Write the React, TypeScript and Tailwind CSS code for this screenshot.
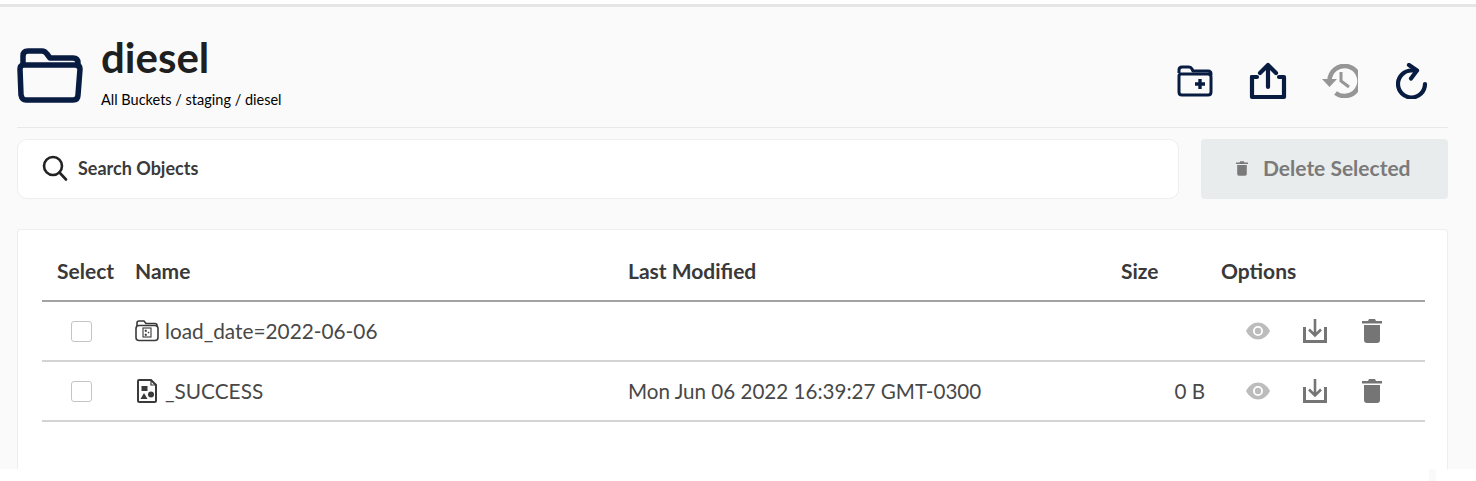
const navy = '#081c42';

const FolderIcon = () => (
  <svg viewBox="0 0 66 56" className="w-[66px] h-[56px]" fill="none" stroke={navy} strokeWidth="5.5" strokeLinejoin="round" strokeLinecap="round">
    <path d="M6 17V9q0-5 5-5h14q3 0 5 3l3 4h23q5 0 5 5v3" />
    <path d="M3 22q0-4 4-4h52q4 0 4 4l-2 26q0 5-5 5H9q-4 0-5-5z" />
  </svg>
);

const NewPathIcon = () => (
  <svg viewBox="0 0 36 32" className="w-[36px] h-[32px]" fill="none" stroke={navy} strokeWidth="3" strokeLinejoin="round">
    <path d="M2 8V5q0-3 3-3h7q2 0 3 2l1 2h15q3 0 3 3v1" />
    <path d="M2 11q0-2 2-2h27q3 0 3 3v15q0 3-3 3H5q-3 0-3-3z" />
    <path d="M23 14v10M18 19h10" strokeWidth="3.4" />
  </svg>
);

const UploadIcon = () => (
  <svg viewBox="0 0 38 38" className="w-[38px] h-[38px]" fill="none" stroke={navy} strokeWidth="4.2" strokeLinecap="round" strokeLinejoin="round">
    <path d="M19 25V3M11 11l8-8 8 8" />
    <path d="M3 15v20h32V15h-5" />
    <path d="M3 15h5" />
  </svg>
);

const HistoryIcon = () => (
  <svg viewBox="0 0 36 34" className="w-[36px] h-[34px]" fill="none" stroke="#969696" strokeWidth="4.6">
    <path d="M7.500 17a15 15 0 1 1 6 12" />
    <path d="M0 15l7.500 8 7.500-8z" fill="#969696" stroke="none" />
    <path d="M19 8v9l8 6" strokeWidth="3" />
  </svg>
);

const RefreshIcon = () => (
  <svg viewBox="0 0 32 36" className="w-[32px] h-[36px]" fill="none" stroke={navy} strokeWidth="4.2" strokeLinecap="round" strokeLinejoin="round">
    <path d="M29 21a13.500 13.500 0 1 1-13.500-13.500h5" />
    <path d="M13 2l8 5.500-6 8" />
  </svg>
);

const SearchIcon = () => (
  <svg viewBox="0 0 26 26" className="w-[26px] h-[26px]" fill="none" stroke="#222222" strokeWidth="2.600" strokeLinecap="round">
    <circle cx="11" cy="11" r="9" />
    <path d="M17.500 17.500L24 24.500" />
  </svg>
);

const EyeIcon = () => (
  <svg viewBox="0 0 24 18" className="w-[24px] h-[18px]" fill="#bcbcbc">
    <path fillRule="evenodd" d="M0 9C3 3.500 7 0.500 12 0.500S21 3.500 24 9c-3 5.500-7 8.500-12 8.500S3 14.500 0 9zm12-5a5 5 0 1 0 0 10a5 5 0 0 0 0-10z" />
    <circle cx="12" cy="9" r="3.200" />
  </svg>
);

const TrashIcon = ({ className }: { className: string }) => (
  <svg viewBox="0 0 20 24" className={className} fill="currentColor">
    <path d="M7 0h6l1 2h6v2.500H0V2h6z" />
    <path d="M2 6h16v15q0 3-3 3H5q-3 0-3-3z" />
  </svg>
);

const DownloadIcon = () => (
  <svg viewBox="0 0 24 24" className="w-[24px] h-[24px]" fill="none" stroke="#757575">
    <path d="M12 0v16M6 10.500l6 6 6-6" strokeWidth="2.600" />
    <path d="M1.500 8v14.500h21V8" strokeWidth="3" />
  </svg>
);

const FolderFileIcon = () => (
  <svg viewBox="0 0 24 22" className="w-[24px] h-[22px]" fill="none" stroke="#3a3a3a" strokeWidth="1.600">
    <path d="M2 6V3q0-2 2-2h5l2 2.500h9q2 0 2 2V7" />
    <rect x="1" y="5.500" width="22" height="15" rx="3" />
    <rect x="8" y="8" width="8" height="9" strokeWidth="1.100" />
    <path d="M10 10h1.500v1.500H10zM13 12h1v1h-1zM10 14h1.500v1.500H10z" fill="#3a3a3a" strokeWidth="0.500" />
  </svg>
);

const ObjectIcon = () => (
  <svg viewBox="0 0 20 24" className="w-[20px] h-[24px] ml-[2px]" fill="none" stroke="#3a3a3a" strokeWidth="2">
    <path d="M2 1h12l5 5v15.500q0 1.500-1.500 1.500h-15Q1 23 1 21.500V2q0-1 1-1z" />
    <path d="M14 1v5h5" strokeWidth="1.200" />
    <rect x="4.500" y="7" width="6" height="5" fill="#3a3a3a" stroke="none" />
    <circle cx="14" cy="15.500" r="3" fill="#3a3a3a" stroke="none" />
    <path d="M7 14l3.500 6h-7z" fill="#3a3a3a" stroke="none" />
  </svg>
);

const Checkbox = () => (
  <div className="w-[21px] h-[21px] rounded-[3px] border border-[#c4c4c4] bg-white" />
);

const rows = [
  { name: 'load_date=2022-06-06', modified: '', size: '', folder: true },
  { name: '_SUCCESS', modified: 'Mon Jun 06 2022 16:39:27 GMT-0300', size: '0 B', folder: false },
];

export default function App() {
  return (
    <div className="w-[1476px] h-[481px] overflow-hidden bg-white text-[#393939]" style={{ fontFamily: 'Lato, sans-serif' }}>
      <div className="h-[4px]" />
      <div className="h-[3px] bg-[#e5e5e5]" />
      <div className="h-[462px] bg-[#fafafa] px-[17px] w-[1476px]">
        <div className="w-[1431px] h-[121px] border-b border-[#e8e8e8] flex items-start">
          <div className="mt-[40px] w-[84px] shrink-0">
            <FolderIcon />
          </div>
          <div className="flex-1 pt-[25px]">
            <h1 className="text-[42px] leading-[50px] font-bold text-[#1f1f1f]">diesel</h1>
            <p className="text-[14.500px] leading-[18px] mt-[9px] text-black">All Buckets / staging / diesel</p>
          </div>
          <div className="flex items-center mt-[55px] mr-[20px]">
            <NewPathIcon />
            <div className="ml-[36px]"><UploadIcon /></div>
            <div className="ml-[35px]"><HistoryIcon /></div>
            <div className="ml-[38px]"><RefreshIcon /></div>
          </div>
        </div>
        <div className="w-[1431px] flex gap-[22px] mt-[11px]">
          <div className="w-[1162px] h-[60px] bg-white rounded-[10px] border border-[#eeeeee] flex items-center pl-[24px] pb-[2px]">
            <SearchIcon />
            <span className="ml-[10px] text-[18px] font-bold text-[#3a3a3a]">Search Objects</span>
          </div>
          <div className="w-[247px] h-[60px] bg-[#e9ecec] rounded-[4px] flex items-center pl-[35px] pb-[2px] text-[#7a7a7a]">
            <TrashIcon className="w-[12px] h-[15px]" />
            <span className="ml-[15px] text-[21px] font-bold">Delete Selected</span>
          </div>
        </div>
        <div className="w-[1431px] h-[240px] mt-[30px] bg-white rounded-t-[4px] border border-b-0 border-[#eeeeee] pl-[24px] pr-[22px] pt-[12px]">
          <div className="h-[60px] border-b-2 border-[#a3a3a3] flex items-center text-[21px] font-bold text-[#393939]">
            <div className="w-[93px] pl-[15px] shrink-0">Select</div>
            <div className="w-[493px] shrink-0">Name</div>
            <div className="w-[493px] shrink-0">Last Modified</div>
            <div className="w-[100px] shrink-0">Size</div>
            <div>Options</div>
          </div>
          {rows.map((row) => (
            <div key={row.name} className="h-[60px] border-b-2 border-[#d4d4d4] flex items-center text-[20.600px] text-[#484848]">
              <div className="w-[93px] pl-[29px] shrink-0"><Checkbox /></div>
              <div className="w-[493px] shrink-0 flex items-center gap-[6px]">
                {row.folder ? <FolderFileIcon /> : <ObjectIcon />}
                <span className={row.folder ? 'text-[20.800px]' : 'ml-[2px] text-[20.800px]'}>{row.name}</span>
              </div>
              <div className="w-[493px] shrink-0">{row.modified}</div>
              <div className="w-[84px] shrink-0 text-right">{row.size}</div>
              <div className="flex items-center ml-[41px]">
                <EyeIcon />
                <div className="ml-[33px]"><DownloadIcon /></div>
                <div className="ml-[35px]"><TrashIcon className="w-[20px] h-[24px] text-[#757575]" /></div>
              </div>
            </div>
          ))}
        </div>
      </div>
      <div className="h-[12px] flex justify-end pr-[40px]">
        <div className="w-[7px] h-full bg-[#fafafa]" />
      </div>
    </div>
  );
}
